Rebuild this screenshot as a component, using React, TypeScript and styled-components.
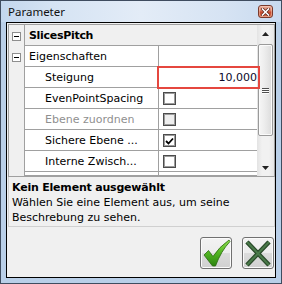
import React from 'react';
import styled, { createGlobalStyle } from 'styled-components';

const Global = createGlobalStyle`
  html, body { margin: 0; padding: 0; background: #ffffff; }
  body { font-family: "DejaVu Sans", "Liberation Sans", sans-serif; font-size: 11px; color: #000; }
  #root { width: 282px; height: 284px; }
  * { box-sizing: border-box; }
`;

const Window = styled.div`
  width: 282px;
  height: 284px;
  border: 1px solid #3f4c5f;
  display: flex;
  flex-direction: column;
  background: #b9cfe8;
`;

const TitleBar = styled.div`
  height: 21px;
  flex: none;
  display: flex;
  align-items: center;
  justify-content: space-between;
  padding: 0 8px 0 7px;
  background: linear-gradient(to right, #c3d7ee 0%, #d5e3f3 18%, #e3ecf7 50%, #d6e3f3 80%, #c8daef 100%);
`;

const Title = styled.span`
  font-family: "Noto Sans", "Open Sans", sans-serif;
  font-size: 11.5px;
  color: #111;
  line-height: 21px;
`;

const CloseButton = styled.div`
  width: 15px;
  height: 13px;
  border: 1px solid #7a3a2c;
  border-radius: 3px;
  background: linear-gradient(#eab2a0 0%, #d9785d 45%, #c4472c 55%, #d8704e 100%);
  box-shadow: inset 0 0 0 1px rgba(255, 220, 200, 0.45);
  display: flex;
  align-items: center;
  justify-content: center;
`;

const Frame = styled.div`
  flex: 1;
  display: flex;
  padding: 0 5px 5px 5px;
`;

const Content = styled.div`
  flex: 1;
  border: 1px solid #000;
  background: #f0f0f0;
  display: flex;
  flex-direction: column;
  padding: 1px 0 8px 1px;
`;

const Grid = styled.div`
  height: 153px;
  flex: none;
  border: 1px solid #a0a0a0;
  display: flex;
  background: #fff;
`;

const Rows = styled.div`
  flex: 1;
  display: flex;
  flex-direction: column;
`;

const Row = styled.div<{ $partial?: boolean }>`
  display: flex;
  flex: none;
  height: ${(p) => (p.$partial ? 4 : 21)}px;
`;

const Gutter = styled.div`
  width: 16px;
  flex: none;
  background: #f0f0f0;
  border-right: 1px solid #a0a0a0;
  display: flex;
  align-items: center;
  padding-left: 3px;
  padding-top: 1px;
`;

const ExpandBox = styled.div`
  width: 9px;
  height: 9px;
  border: 1px solid #8e8e8e;
  background: #fff;
  display: flex;
  align-items: center;
  justify-content: center;
  &::before {
    content: '';
    width: 5px;
    height: 1px;
    background: #000;
  }
`;

const CategoryCell = styled.div`
  flex: 1;
  background: #f0f0f0;
  border-bottom: 1px solid #a0a0a0;
  font-weight: bold;
  line-height: 20px;
  padding: 1px 0 0 4px;
  letter-spacing: -0.3px;
  white-space: nowrap;
`;

const NameCell = styled.div<{ $indent: number; $disabled?: boolean }>`
  width: 134px;
  flex: none;
  border-right: 1px solid #a0a0a0;
  border-bottom: 1px solid #a0a0a0;
  line-height: 19px;
  padding-top: 1px;
  padding-left: ${(p) => p.$indent}px;
  color: ${(p) => (p.$disabled ? '#8f8f8f' : '#000')};
  white-space: nowrap;
  overflow: hidden;
`;

const ValueCell = styled.div<{ $highlight?: boolean }>`
  flex: 1;
  position: relative;
  border-bottom: 1px solid #a0a0a0;
  display: flex;
  align-items: center;
  justify-content: ${(p) => (p.$highlight ? 'flex-end' : 'flex-start')};
  padding: 1px 0 0 4px;
  color: #0a0a2a;
  ${(p) =>
    p.$highlight &&
    `
    &::after {
      content: '';
      position: absolute;
      z-index: 2;
      left: -2px;
      right: -3px;
      top: -1px;
      bottom: -2px;
      border: 2px solid #e5473f;
    }
  `}
`;

const Check = styled.div<{ $disabled?: boolean }>`
  width: 13px;
  height: 13px;
  border: 1px solid #4c4c4c;
  box-shadow: inset 0 0 0 1px #9c9c9c;
  background: ${(p) => (p.$disabled ? '#eeeeee' : '#ffffff')};
  display: flex;
  align-items: center;
  justify-content: center;
`;

const ScrollBar = styled.div`
  width: 17px;
  flex: none;
  display: flex;
  flex-direction: column;
  background: linear-gradient(to right, #e3e3e3, #f1f1f1 30%, #f1f1f1 70%, #e6e6e6);
`;

const ArrowButton = styled.div`
  height: 17px;
  flex: none;
  display: flex;
  align-items: center;
  justify-content: center;
`;

const Track = styled.div`
  flex: 1;
  padding: 2px 1px 0 1px;
`;

const Thumb = styled.div`
  height: 92px;
  border: 1px solid #9a9a9a;
  border-radius: 2px;
  background: linear-gradient(to right, #f6f6f6, #ececec 45%, #dcdcdc);
  box-shadow: inset 0 0 0 1px #fbfbfb;
  display: flex;
  flex-direction: column;
  align-items: center;
  justify-content: center;
  gap: 1px;
`;

const Grip = styled.div`
  width: 7px;
  height: 1px;
  background: #4e4e4e;
  box-shadow: 0 1px 0 #fdfdfd;
`;

const DocPanel = styled.div`
  height: 50px;
  flex: none;
  border: 1px solid #d0d0d0;
  border-top: none;
  padding: 3px 3px 0 3px;
  line-height: 15px;
  background: #f0f0f0;
`;

const DocTitle = styled.div`
  font-weight: bold;
  letter-spacing: -0.2px;
`;

const DocText = styled.div`
  color: #000;
`;

const ButtonRow = styled.div`
  margin-top: auto;
  display: flex;
  justify-content: flex-end;
  gap: 10px;
  padding-right: 1px;
`;

const IconButton = styled.div`
  width: 32px;
  height: 32px;
  border: 1px solid #707070;
  border-radius: 3px;
  background: linear-gradient(#f3f3f3 0%, #ececec 50%, #dcdcdc 50%, #d0d0d0 100%);
  box-shadow: inset 0 0 0 1px #fbfbfb;
  display: flex;
  align-items: center;
  justify-content: center;
`;

const UpArrow = () => (
  <svg width="7" height="4" viewBox="0 0 7 4">
    <path d="M0 4 L3.5 0 L7 4 Z" fill="#222" />
  </svg>
);

const DownArrow = () => (
  <svg width="7" height="4" viewBox="0 0 7 4">
    <path d="M0 0 L7 0 L3.5 4 Z" fill="#222" />
  </svg>
);

const CheckMark = () => (
  <svg width="9" height="8" viewBox="0 0 9 8">
    <path d="M1 4 L3.5 6.5 L8 1.5" stroke="#000" strokeWidth="1.8" fill="none" />
  </svg>
);

const CloseGlyph = () => (
  <svg width="9" height="8" viewBox="0 0 9 8">
    <path d="M1.5 1 L7.5 7 M7.5 1 L1.5 7" stroke="#5a2418" strokeWidth="3" strokeLinecap="square" />
    <path d="M1.5 1 L7.5 7 M7.5 1 L1.5 7" stroke="#ffffff" strokeWidth="1.6" strokeLinecap="square" />
  </svg>
);

const OkIcon = () => (
  <svg width="30" height="30" viewBox="0 0 30 30">
    <defs>
      <linearGradient id="okg" x1="0" y1="0" x2="0" y2="1">
        <stop offset="0" stopColor="#8fe04e" />
        <stop offset="0.5" stopColor="#52b422" />
        <stop offset="1" stopColor="#2c8410" />
      </linearGradient>
    </defs>
    <path
      d="M3 17 L7.5 12.5 L12 18.5 Q18 9 28 2 L29 3.5 Q20 13 14.5 28 L11.5 28 Z"
      fill="url(#okg)"
      stroke="#2a6a10"
      strokeWidth="0.8"
      strokeLinejoin="round"
    />
  </svg>
);

const CancelIcon = () => (
  <svg width="30" height="30" viewBox="0 0 30 30">
    <path d="M4 4 L26 27 M26 4 L4 27" stroke="#2a4a2a" strokeWidth="4.6" strokeLinecap="butt" />
    <path d="M4 4 L26 27 M26 4 L4 27" stroke="#4a7a4a" strokeWidth="2" strokeLinecap="butt" />
  </svg>
);

type Prop = {
  name: string;
  kind: 'text' | 'check';
  value?: string;
  checked?: boolean;
  disabled?: boolean;
  highlight?: boolean;
};

const props: Prop[] = [
  { name: 'Steigung', kind: 'text', value: '10,000', highlight: true },
  { name: 'EvenPointSpacing', kind: 'check' },
  { name: 'Ebene zuordnen', kind: 'check', disabled: true },
  { name: 'Sichere Ebene ...', kind: 'check', checked: true },
  { name: 'Interne Zwisch...', kind: 'check' },
];

export default function App() {
  return (
    <>
      <Global />
      <Window>
        <TitleBar>
          <Title>Parameter</Title>
          <CloseButton>
            <CloseGlyph />
          </CloseButton>
        </TitleBar>
        <Frame>
          <Content>
            <Grid>
              <Rows>
                <Row>
                  <Gutter>
                    <ExpandBox />
                  </Gutter>
                  <CategoryCell>SlicesPitch</CategoryCell>
                </Row>
                <Row>
                  <Gutter>
                    <ExpandBox />
                  </Gutter>
                  <NameCell $indent={4}>Eigenschaften</NameCell>
                  <ValueCell />
                </Row>
                {props.map((p, i) => (
                  <Row key={i}>
                    <Gutter />
                    <NameCell $indent={20} $disabled={p.disabled}>
                      {p.name}
                    </NameCell>
                    <ValueCell $highlight={p.highlight}>
                      {p.kind === 'text' && p.value}
                      {p.kind === 'check' && (
                        <Check $disabled={p.disabled}>{p.checked && <CheckMark />}</Check>
                      )}
                    </ValueCell>
                  </Row>
                ))}
                <Row $partial>
                  <Gutter />
                  <NameCell $indent={20} />
                  <ValueCell />
                </Row>
              </Rows>
              <ScrollBar>
                <ArrowButton>
                  <UpArrow />
                </ArrowButton>
                <Track>
                  <Thumb>
                    <Grip />
                    <Grip />
                    <Grip />
                  </Thumb>
                </Track>
                <ArrowButton>
                  <DownArrow />
                </ArrowButton>
              </ScrollBar>
            </Grid>
            <DocPanel>
              <DocTitle>Kein Element ausgewählt</DocTitle>
              <DocText>Wählen Sie eine Element aus, um seine Beschrebung zu sehen.</DocText>
            </DocPanel>
            <ButtonRow>
              <IconButton>
                <OkIcon />
              </IconButton>
              <IconButton>
                <CancelIcon />
              </IconButton>
            </ButtonRow>
          </Content>
        </Frame>
      </Window>
    </>
  );
}
